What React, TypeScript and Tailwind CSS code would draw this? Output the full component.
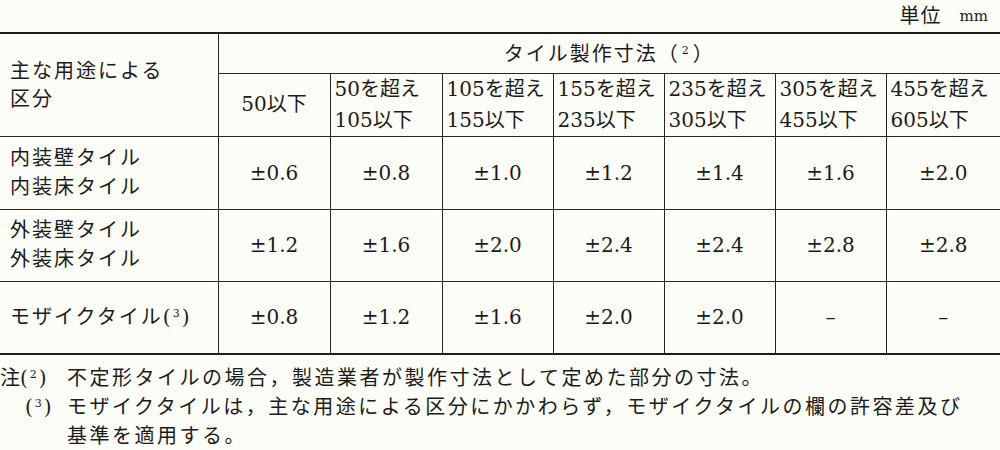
// JIS tile size tolerance table (scan recreation)

const ranges: [string, string?][] = [
  ['50以下'],
  ['50を超え', '105以下'],
  ['105を超え', '155以下'],
  ['155を超え', '235以下'],
  ['235を超え', '305以下'],
  ['305を超え', '455以下'],
  ['455を超え', '605以下'],
];

const rows = [
  {
    label: ['内装壁タイル', '内装床タイル'],
    values: ['±0.6', '±0.8', '±1.0', '±1.2', '±1.4', '±1.6', '±2.0'],
    h: 'h-[73px]',
  },
  {
    label: ['外装壁タイル', '外装床タイル'],
    values: ['±1.2', '±1.6', '±2.0', '±2.4', '±2.4', '±2.8', '±2.8'],
    h: 'h-[72px]',
  },
  {
    label: null,
    values: ['±0.8', '±1.2', '±1.6', '±2.0', '±2.0', '–', '–'],
    h: 'h-[73px]',
  },
];

const cell = 'border-[1.5px] border-[#262626] p-0';

function Sup({ n }: { n: string }) {
  return <sup className="text-[11px] relative -top-[7px] px-[2px]">{n}</sup>;
}

export default function App() {
  return (
    <div className="w-[1000px] h-[450px] overflow-hidden bg-[#fdfdf8] text-[#1b1b1b] font-['DejaVu_Serif','Noto_Sans_CJK_JP',serif] text-[20px]">
      {/* unit */}
      <div className="h-[32px] flex items-center justify-end pr-[12px] gap-[18px]">
        <span className="tracking-[1px]">単位</span>
        <span className="text-[15px]">mm</span>
      </div>

      <table className="w-full table-fixed border-collapse border-y-2 border-[#1e1e1e]">
        <colgroup>
          <col className="w-[218px]" />
          <col className="w-[112px]" />
          <col className="w-[112px]" />
          <col className="w-[111px]" />
          <col className="w-[111px]" />
          <col className="w-[111px]" />
          <col className="w-[111px]" />
          <col />
        </colgroup>
        <thead>
          <tr className="h-[40px]">
            <th rowSpan={2} className={`${cell} border-l-0 border-t-0 text-left font-normal align-middle pl-[10px] leading-[28px] tracking-[2px]`}>
              主な用途による
              <br />
              区分
            </th>
            <th colSpan={7} className={`${cell} border-r-0 border-t-0 font-normal tracking-[2px] pt-[2px]`}>
              タイル製作寸法（<Sup n="2" />）
            </th>
          </tr>
          <tr className="h-[63px]">
            {ranges.map(([a, b], i) => (
              <th
                key={i}
                className={`${cell} font-normal leading-[31px] whitespace-nowrap ${b ? 'text-left pl-[4px]' : 'text-center'} ${i === ranges.length - 1 ? 'border-r-0' : ''}`}
              >
                {a}
                {b && (
                  <>
                    <br />
                    {b}
                  </>
                )}
              </th>
            ))}
          </tr>
        </thead>
        <tbody>
          {rows.map((r, ri) => (
            <tr key={ri} className={r.h}>
              <td className={`${cell} border-l-0 pl-[10px] leading-[29px] tracking-[2px] ${ri === rows.length - 1 ? 'border-b-0' : ''}`}>
                {r.label ? (
                  <>
                    {r.label[0]}
                    <br />
                    {r.label[1]}
                  </>
                ) : (
                  <span className="whitespace-nowrap">
                    モザイクタイル<span className="tracking-normal">(<Sup n="3" />)</span>
                  </span>
                )}
              </td>
              {r.values.map((v, vi) => (
                <td
                  key={vi}
                  className={`${cell} text-center ${vi === r.values.length - 1 ? 'border-r-0' : ''} ${ri === rows.length - 1 ? 'border-b-0' : ''}`}
                >
                  {v}
                </td>
              ))}
            </tr>
          ))}
        </tbody>
      </table>

      {/* notes */}
      <div className="mt-[9px] grid grid-cols-[67px_1fr] leading-[29px] tracking-[2.5px] whitespace-nowrap">
        <div className="tracking-normal">
          注(<Sup n="2" />)
        </div>
        <div>不定形タイルの場合，製造業者が製作寸法として定めた部分の寸法。</div>
        <div className="tracking-normal pl-[25px]">
          (<Sup n="3" />)
        </div>
        <div>
          モザイクタイルは，主な用途による区分にかかわらず，モザイクタイルの欄の許容差及び
          <br />
          基準を適用する。
        </div>
      </div>
    </div>
  );
}
